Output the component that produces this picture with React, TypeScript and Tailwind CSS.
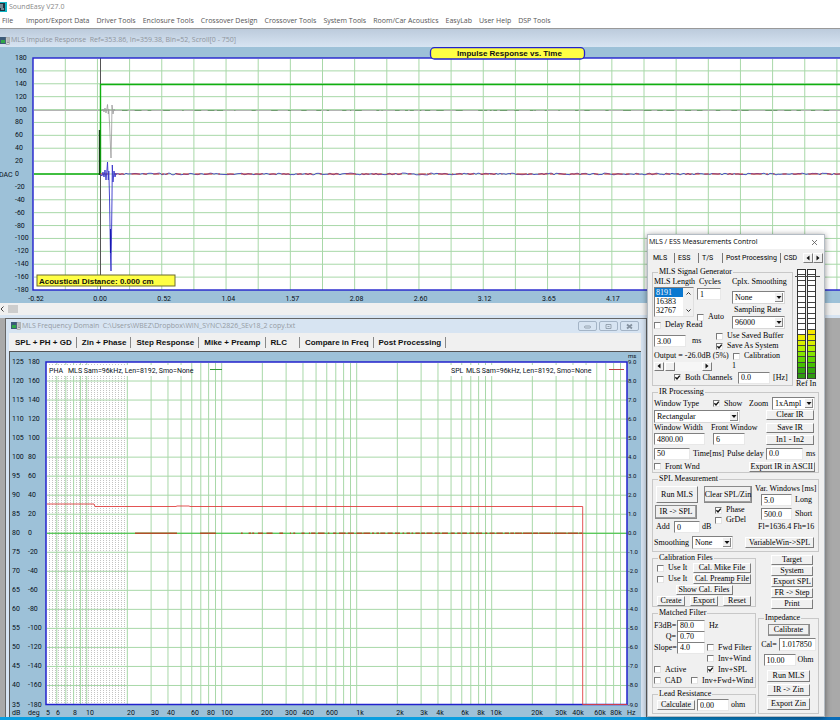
import { useId, useState } from 'react';
import type { ReactNode } from 'react';

/* ─── Static data ──────────────────────────────────────────────────────────── */
const MENU = [
  'File', 'Import/Export Data', 'Driver Tools', 'Enclosure Tools', 'Crossover Design', 'Crossover Tools',
  'System Tools', 'Room/Car Acoustics', 'EasyLab', 'User Help', 'DSP Tools',
];
const FREQ_TABS = [
  'SPL + PH + GD', 'Zin + Phase', 'Step Response', 'Mike + Preamp', 'RLC', 'Compare in Freq', 'Post Processing',
];
const CTRL_TABS = ['MLS', 'ESS', 'T/S', 'Post Processing', 'CSD'];

/* level colours, from the bottom segment up */
const METER = [
  '#2f9a10', '#33a60c', '#44c000', '#62d400', '#84e400', '#b4ee00', '#d8ee00', '#eeee00', '#f6e600',
];

const BLUE = '#2222cc';
const GRID = '#a8d8a8';
const BOLD_SANS = '"Liberation Sans", Arial, sans-serif';
const AXIS_SANS = 'Roboto, "Liberation Sans", Arial, sans-serif';

/* ─── Helpers ──────────────────────────────────────────────────────────────── */
// small repeatable generator, so the noise floor looks the same on every render
function seeded(seed: number) {
  let s = seed;
  return () => {
    s = (s * 1103515245 + 12345) % 2147483648;
    return s / 2147483648;
  };
}

function noisePath(y: number, from: number, to: number, amp: number, seed: number) {
  const rnd = seeded(seed);
  let d = `M${from},${y}`;
  for (let x = from + 1; x < to; x += 2) d += ` L${x},${(y + (rnd() - 0.5) * amp).toFixed(2)}`;
  return d;
}

function dashes(y: number, from: number, to: number, maxLen: number, maxGap: number, seed: number) {
  const rnd = seeded(seed);
  let d = '';
  let x = from;
  while (x < to) {
    const len = 1 + rnd() * maxLen;
    d += `M${x.toFixed(1)},${y} H${Math.min(to, x + len).toFixed(1)} `;
    x += len + 1 + rnd() * maxGap;
  }
  return d;
}

/* ─── Impulse response chart ───────────────────────────────────────────────── */
const IMP_STEP = 232 / 18;
const impY = (v: number) => 11 + ((180 - v) / 20) * IMP_STEP;

function ImpulseChart() {
  const levels = Array.from({ length: 19 }, (_, i) => 180 - i * 20);
  const cols = Array.from({ length: 60 }, (_, i) => 65.3 + i * 32.15);
  const times = ['-0.52', '0.00', '0.52', '1.04', '1.57', '2.08', '2.60', '3.12', '3.65', '4.17'];
  const zero = impY(0);

  return (
    <svg className="block h-64 w-full bg-[#9dc1d8]" fontFamily={AXIS_SANS} fontSize={7} fill="#081018">
      <rect x={33} y={11} width={4000} height={232} fill="#fff" />
      {levels.slice(1, -1).map(v => (
        <line key={v} x1={34} x2={4000} y1={impY(v)} y2={impY(v)} stroke={GRID} />
      ))}
      {cols.map(x => <line key={x} x1={x} x2={x} y1={12} y2={243} stroke={GRID} />)}

      {/* grey reference channel */}
      <line x1={34} x2={4000} y1={63.5} y2={63.5} stroke="#b4b4b4" />
      <path d={dashes(63.5, 122, 1600, 7, 16, 11)} stroke="#6f9c6f" fill="none" />
      <path
        d="M101,63 L102,64 L103,62 L104,65 L105,61 L106,66 L107,61 L107.5,57.5 L108.3,67 L108.8,62 L109.7,80 L110.5,100 L111,111 L111.5,90 L112,58 L113,67 L114,62 L115,64"
        stroke="#9a9a9a" strokeWidth={0.8} fill="none"
      />

      {/* step trace */}
      <line x1={100.5} x2={100.5} y1={11} y2={243} stroke="#555" />
      <path d={`M34,${zero} H100.5 V37.5 H4000`} stroke="#10b010" strokeWidth={1.4} fill="none" />
      <line x1={99.5} x2={99.5} y1={83} y2={128} stroke="#124012" strokeWidth={1.4} />

      {/* measured channel */}
      <path d={noisePath(zero, 115, 1600, 1.8, 5)} stroke="#2828b8" strokeWidth={0.8} fill="none" />
      <path d={dashes(zero, 100, 1600, 10, 7, 23)} stroke="#d83038" fill="none" />
      <path
        d="M100,127 L102,129 L103,125 L104,130 L105,123 L106,133 L107,122 L107.5,115 L108.3,133 L108.8,124 L109.5,150 L110,180 L110.5,210 L111,224 L111.5,190 L112,150 L112.3,118 L113,135 L114,124 L115,130 L116,126"
        stroke="#3434c8" strokeWidth={0.9} fill="none"
      />
      <line x1={110.5} x2={110.5} y1={182} y2={206} stroke="#1818b0" />

      <rect x={33} y={11} width={4000} height={232} fill="none" stroke={BLUE} strokeWidth={1.4} />

      {levels.map(v => (
        <text key={v} x={15} y={impY(v) + 2}>{v}</text>
      ))}
      <text x={-1} y={zero + 3}>DAC</text>
      {times.map((t, i) => (
        <text key={t} x={36 + i * 64.1} y={254} textAnchor="middle">{t}</text>
      ))}

      <rect x={37} y={228} width={138} height={11} fill="#ffff44" stroke="#6b6b30" />
      <text x={39} y={237} fontFamily={BOLD_SANS} fontSize={8} fontWeight={700} fill="#111">Acoustical Distance: 0.000 cm</text>

      <rect x={430.5} y={0.7} width={154} height={11.3} rx={4} fill="#ffff44" stroke={BLUE} strokeWidth={1.3} />
      <text x={509.5} y={9} fontFamily={BOLD_SANS} fontSize={8} fontWeight={700} fill="#111" textAnchor="middle">Impulse Response vs. Time</text>
    </svg>
  );
}

/* ─── Frequency chart ──────────────────────────────────────────────────────── */
const DECADE = 135;
const freqX = (f: number) => 211.7 + (Math.log10(f) - 2) * DECADE;
const FREQ_STEP = 342.5 / 18;

const FREQ_LABELS: [string, number][] = [
  ['5', 38], ['6', 48], ['8', 65], ['10', 80], ['20', 121], ['30', 145], ['40', 161], ['60', 185], ['80', 201],
  ['100', 217], ['200', 257], ['300', 281], ['400', 298], ['600', 322], ['1k', 350], ['2k', 390], ['3k', 414],
  ['4k', 430], ['6k', 455], ['8k', 471], ['10k', 486], ['20k', 527], ['30k', 551], ['40k', 568], ['60k', 590], ['80k', 606],
];

function FrequencyChart() {
  const rows = Array.from({ length: 19 }, (_, i) => i);
  const rowY = (i: number) => 10 + i * FREQ_STEP;
  const freqs = [1, 10, 100, 1000, 10000].flatMap(m => [1, 2, 3, 4, 5, 6, 7, 8, 9].map(k => k * m)).filter(f => f > 5);
  const zero = rowY(9);

  return (
    <svg className="block h-[365px] w-full bg-[#9dc1d8]" fontFamily={AXIS_SANS} fontSize={7} fill="#081018">
      <defs>
        <pattern id="low-band" width={3} height={2} patternUnits="userSpaceOnUse">
          <rect width={1} height={1} fill="#c4c4c4" />
        </pattern>
      </defs>
      <rect x={36} y={10} width={581} height={342.5} fill="#fff" />
      <rect x={37} y={11} width={80} height={341} fill="url(#low-band)" />
      {rows.slice(1, -1).map(i => <line key={i} x1={37} x2={617} y1={rowY(i)} y2={rowY(i)} stroke={GRID} />)}
      {freqs.map(f => <line key={f} x1={freqX(f)} x2={freqX(f)} y1={11} y2={352} stroke={GRID} />)}

      <line x1={37} x2={617} y1={zero} y2={zero} stroke="#3cc03c" strokeWidth={1.2} />
      <path d={`M125,${zero} H167 M190,${zero} H206`} stroke="#b05028" strokeWidth={1.4} />
      <path d={dashes(zero, 231, 330, 6, 6, 8)} stroke="#b05028" strokeWidth={1.4} />
      <path d={dashes(zero, 330, 510, 6, 2, 19)} stroke="#b05028" strokeWidth={1.4} />
      <path d={dashes(zero, 510, 572, 16, 0, 4)} stroke="#b05028" strokeWidth={1.4} />

      <rect x={36} y={10} width={581} height={342.5} fill="none" stroke={BLUE} strokeWidth={1.5} />
      <path
        d="M37,152 H84 L85,154.5 H166 L167,154 H179 L180,154.5 H572.7 V352.5 H617"
        stroke="#e04040" strokeWidth={0.9} fill="none"
      />

      {/* legends */}
      <rect x={38} y={13} width={142} height={11} fill="#fff" />
      <text x={39} y={21}>PHA</text>
      <text x={58} y={21}>MLS Sam=96kHz, Len=8192, Smo=None</text>
      <line x1={200} x2={212} y1={17.5} y2={17.5} stroke="#3a9a3a" />
      <rect x={439} y={13} width={138} height={11} fill="#fff" />
      <text x={441} y={21}>SPL</text>
      <text x={456} y={21}>MLS Sam=96kHz, Len=8192, Smo=None</text>
      <line x1={599} x2={614} y1={17.5} y2={17.5} stroke="#c04040" />

      {/* axes */}
      {rows.map(i => (
        <g key={i}>
          <text x={2} y={rowY(i) + 2}>{125 - i * 5}</text>
          <text x={18} y={rowY(i) + 2}>{180 - i * 20}</text>
          <text x={618} y={rowY(i) + 2} fontSize={6}>{(9 - i).toFixed(1)}</text>
        </g>
      ))}
      <text x={618} y={6} fontSize={6}>ms</text>
      <text x={2} y={363}>dB</text>
      <text x={18} y={363}>deg</text>
      {FREQ_LABELS.map(([t, x]) => (
        <text key={x} x={x} y={363} textAnchor="middle">{t}</text>
      ))}
      <text x={617} y={363}>Hz</text>
    </svg>
  );
}

/* ─── Form bits ────────────────────────────────────────────────────────────── */
function Group({ title, className = '', children }: { title: string; className?: string; children: ReactNode }) {
  return (
    <fieldset className={`min-w-0 border border-[#c8c8c8] px-px ${className}`}>
      <legend className="ml-1 h-2.5 px-px">{title}</legend>
      {children}
    </fieldset>
  );
}

function Check({ label, on = false, className = '' }: { label: string; on?: boolean; className?: string }) {
  const [checked, setChecked] = useState(on);
  return (
    <label className={`flex h-2.5 items-center gap-1 whitespace-nowrap ${className}`}>
      <span className="relative size-[7px] shrink-0">
        <input
          type="checkbox"
          checked={checked}
          onChange={e => setChecked(e.target.checked)}
          className="block size-[7px] appearance-none border border-t-[#7a7a7a] border-r-[#e4e4e4] border-b-[#e4e4e4] border-l-[#7a7a7a] bg-white"
        />
        {checked && (
          <svg viewBox="0 0 7 7" className="pointer-events-none absolute inset-0 size-[7px]">
            <path d="M1.4 3.2 L3 5 L5.8 1.6" stroke="#111" strokeWidth={1.4} fill="none" />
          </svg>
        )}
      </span>
      {label}
    </label>
  );
}

function Field({ label, value, className }: { label: string; value: string; className: string }) {
  return (
    <input
      aria-label={label}
      defaultValue={value}
      className={`h-3 shrink-0 border border-t-[#808080] border-r-[#e8e8e8] border-b-[#e8e8e8] border-l-[#808080] bg-white px-0.5 ${className}`}
    />
  );
}

function Pick({ label, options, className }: { label: string; options: string[]; className: string }) {
  return (
    <span className={`relative block h-[13px] shrink-0 ${className}`}>
      <select
        aria-label={label}
        className="block h-full w-full appearance-none border border-t-[#808080] border-r-[#d8d8d8] border-b-[#d8d8d8] border-l-[#808080] bg-white px-0.5"
      >
        {options.map(o => <option key={o}>{o}</option>)}
      </select>
      <span className="pointer-events-none absolute inset-y-0.5 right-0.5 flex w-2 items-center justify-center border-r border-b border-[#888] bg-[#f0f0f0]">
        <svg viewBox="0 0 6 3" className="h-[3px] w-1.5"><path d="M0.5 0 H5.5 L3 3 Z" fill="#111" /></svg>
      </span>
    </span>
  );
}

function Btn({ className = '', strong = false, children }: { className?: string; strong?: boolean; children: ReactNode }) {
  const edge = strong
    ? 'border border-[#8a8a8a] shadow-[inset_-1px_-1px_0_#a0a0a0]'
    : 'border border-t-white border-l-white border-r-[#7c7c7c] border-b-[#7c7c7c]';
  return (
    <button type="button" className={`flex shrink-0 items-center justify-center whitespace-nowrap bg-[#f0f0f0] ${edge} ${className}`}>
      {children}
    </button>
  );
}

function Arrow({ dir }: { dir: 'left' | 'right' }) {
  return (
    <svg viewBox="0 0 4 6" className="h-1.5 w-1">
      <path d={dir === 'left' ? 'M3.5 0.5 V5.5 L0.5 3 Z' : 'M0.5 0.5 V5.5 L3.5 3 Z'} fill="#111" />
    </svg>
  );
}

function Meter({ level }: { level: number }) {
  return (
    <div className="flex h-[110px] w-[9px] flex-col-reverse border border-b-0 border-[#333] bg-white">
      {Array.from({ length: 20 }, (_, i) => (
        <div key={i} className="flex-1 border-b border-[#444]" style={{ background: i < level ? METER[i] : '#fff' }} />
      ))}
    </div>
  );
}

/* ─── Measurement dialog ───────────────────────────────────────────────────── */
function LengthList() {
  const id = useId();
  return (
    <div className="flex w-[43px] flex-col">
      <label htmlFor={id} className="h-2.5 whitespace-nowrap">MLS Length</label>
      <div className="mb-[3px] flex h-[30px] w-10 border border-t-[#808080] border-r-[#e0e0e0] border-b-[#e0e0e0] border-l-[#808080] bg-white">
        <select id={id} size={3} defaultValue="8191" className="h-full w-7 appearance-none overflow-hidden bg-none p-0 leading-[9px]">
          {['8191', '16383', '32767'].map(n => (
            <option key={n} className="h-[9px] min-h-0 px-px py-0 text-[8px] leading-[9px] checked:bg-[linear-gradient(#0a78d0,#0a78d0)] checked:text-white">{n}</option>
          ))}
        </select>
        <div className="flex w-2.5 flex-col items-center justify-between bg-[#f0f0f0] py-1">
          <svg viewBox="0 0 5 3" className="h-[3px] w-[5px]"><path d="M0.5 2.5 L2.5 0.5 L4.5 2.5" stroke="#333" fill="none" /></svg>
          <svg viewBox="0 0 5 3" className="h-[3px] w-[5px]"><path d="M0.5 0.5 L2.5 2.5 L4.5 0.5" stroke="#333" fill="none" /></svg>
        </div>
      </div>
      <Check label="Delay Read" />
    </div>
  );
}

function SignalGenerator() {
  return (
    <Group title="MLS Signal Generator" className="h-[119px] w-[141px]">
      <div className="flex h-[54px]">
        <LengthList />
        <div className="flex w-[35px] flex-col">
          <span className="mb-px h-2.5 pl-0.5">Cycles</span>
          <Field label="Cycles" value="1" className="mb-3 w-6" />
          <Check label="Auto" />
        </div>
        <div className="flex flex-col">
          <span className="mb-1 h-2.5 whitespace-nowrap">Cplx. Smoothing</span>
          <Pick label="Cplx. Smoothing" options={['None', '1/3', '1/6']} className="w-[53px]" />
          <span className="my-px h-2.5 pl-0.5 whitespace-nowrap">Sampling Rate</span>
          <Pick label="Sampling Rate" options={['96000', '48000']} className="w-[53px]" />
        </div>
      </div>
      <div className="flex h-5 items-center">
        <Field label="Delay" value="3.00" className="mr-1.5 w-8" />
        <span className="w-6">ms</span>
        <div className="flex flex-col">
          <Check label="Use Saved Buffer" />
          <Check label="Save As System" on />
        </div>
      </div>
      <div className="flex h-2.5 items-center">
        <span className="w-[79px] whitespace-nowrap">Output = -26.0dB (5%)</span>
        <Check label="Calibration" />
      </div>
      <div className="flex h-2.5 items-center">
        <div className="mr-5 flex h-[9px] w-[58px] justify-between bg-[#f6f6f6]">
          <Btn className="w-2.5"><Arrow dir="left" /></Btn>
          <Btn className="mr-auto ml-px w-2.5">{null}</Btn>
          <Btn className="w-2.5"><Arrow dir="right" /></Btn>
        </div>
        <span>1</span>
      </div>
      <div className="flex h-[13px] items-center pl-5">
        <Check label="Both Channels" on className="w-16" />
        <Field label="Both Channels [Hz]" value="0.0" className="mr-[3px] w-8" />
        <span>[Hz]</span>
      </div>
    </Group>
  );
}

function IrProcessing() {
  return (
    <Group title="IR Processing" className="h-[86px]">
      <div className="flex h-[13px] items-center">
        <span className="w-[59px]">Window Type</span>
        <Check label="Show" on className="w-9" />
        <span className="w-[23px]">Zoom</span>
        <Pick label="Zoom" options={['1xAmpl', '2xAmpl']} className="w-[43px]" />
      </div>
      <div className="flex h-[35px]">
        <div className="flex w-28 flex-col">
          <Pick label="Window Type" options={['Rectangular', 'Hann']} className="w-[86px]" />
          <div className="flex h-2.5 whitespace-nowrap">
            <span className="w-[57px]">Window Width</span>
            <span>Front Window</span>
          </div>
          <div className="flex">
            <Field label="Window Width" value="4800.00" className="mr-2 w-[51px]" />
            <Field label="Front Window" value="6" className="w-8" />
          </div>
        </div>
        <div className="flex flex-col justify-between">
          <Btn className="h-2.5 w-12">Clear IR</Btn>
          <Btn className="h-2.5 w-12">Save IR</Btn>
          <Btn className="h-2.5 w-12">In1 - In2</Btn>
        </div>
      </div>
      <div className="mt-0.5 flex h-[13px] items-center whitespace-nowrap">
        <Field label="Time [ms]" value="50" className="mr-[3px] w-9" />
        <span className="w-[34px]">Time[ms]</span>
        <span className="w-[39px]">Pulse delay</span>
        <Field label="Pulse delay" value="0.0" className="mr-[3px] w-[37px]" />
        <span>ms</span>
      </div>
      <div className="flex h-[13px] items-center justify-between pr-0.5">
        <Check label="Front Wnd" />
        <Btn className="h-2.5 px-px">Export IR in ASCII</Btn>
      </div>
    </Group>
  );
}

function SplMeasurement() {
  return (
    <Group title="SPL Measurement" className="h-[78px]">
      <div className="flex h-[50px]">
        <div className="flex w-[101px] flex-col pt-0.5">
          <div className="mb-0.5 flex gap-1.5 pl-0.5">
            <Btn className="h-[17px] w-[42px]">Run MLS</Btn>
            <Btn strong className="h-[17px] w-12">Clear SPL/Zin</Btn>
          </div>
          <div className="flex">
            <div className="flex w-[61px] flex-col gap-0.5 pl-px">
              <Btn strong className="h-[14px] w-[42px]">IR -&gt; SPL</Btn>
              <div className="flex items-center">
                <span className="w-[19px] pl-px">Add</span>
                <Field label="Add" value="0" className="mr-0.5 w-[26px]" />
                <span>dB</span>
              </div>
            </div>
            <div className="flex flex-col">
              <Check label="Phase" on />
              <Check label="GrDel" />
            </div>
          </div>
        </div>
        <div className="flex flex-col whitespace-nowrap">
          <span className="h-2.5">Var. Windows [ms]</span>
          <div className="mb-0.5 flex items-center gap-[3px] pl-1.5">
            <Field label="Long window" value="5.0" className="w-[31px]" />
            <span>Long</span>
          </div>
          <div className="mb-0.5 flex items-center gap-[3px] pl-1.5">
            <Field label="Short window" value="500.0" className="w-[31px]" />
            <span>Short</span>
          </div>
          <span className="h-2.5 pl-[3px]">Fl=1636.4 Fh=16</span>
        </div>
      </div>
      <div className="mt-0.5 flex h-[13px] items-center">
        <span className="w-[38px]">Smoothing</span>
        <Pick label="Smoothing" options={['None', '1/3', '1/12']} className="mr-3 w-[41px]" />
        <Btn className="h-[11px] w-[69px]">VariableWin-&gt;SPL</Btn>
      </div>
    </Group>
  );
}

function CalibrationFiles() {
  return (
    <Group title="Calibration Files" className="h-[54px]">
      <div className="flex flex-col gap-px">
        <div className="flex items-center justify-between px-[3px]">
          <Check label="Use It" />
          <Btn className="h-2.5 w-[58px]">Cal. Mike File</Btn>
        </div>
        <div className="flex items-center justify-between px-[3px]">
          <Check label="Use It" />
          <Btn className="h-2.5 w-[58px]">Cal. Preamp File</Btn>
        </div>
        <div className="flex justify-center">
          <Btn className="h-2.5 w-[57px]">Show Cal. Files</Btn>
        </div>
        <div className="flex justify-between px-[3px]">
          <Btn className="h-2.5 w-7">Create</Btn>
          <Btn className="h-2.5 w-7">Export</Btn>
          <Btn className="h-2.5 w-7">Reset</Btn>
        </div>
      </div>
    </Group>
  );
}

function MatchedFilter() {
  return (
    <Group title="Matched Filter" className="h-20">
      <div className="mt-0.5 grid auto-rows-[11px] items-center whitespace-nowrap">
        <div className="flex items-center">
          <span className="w-[23px] pr-px text-right">F3dB=</span>
          <Field label="F3dB" value="80.0" className="mr-1 w-7" />
          <span>Hz</span>
        </div>
        <div className="flex items-center">
          <span className="w-[23px] pr-px text-right">Q=</span>
          <Field label="Q" value="0.70" className="w-7" />
        </div>
        <div className="flex items-center">
          <span className="w-[23px] pr-px text-right">Slope=</span>
          <Field label="Slope" value="4.0" className="mr-0.5 w-7" />
          <Check label="Fwd Filter" />
        </div>
        <Check label="Inv+Wind" className="pl-[53px]" />
        <div className="flex">
          <Check label="Active" className="w-[53px]" />
          <Check label="Inv+SPL" on />
        </div>
        <div className="flex">
          <Check label="CAD" className="w-[37px]" />
          <Check label="Inv+Fwd+Wind" />
        </div>
      </div>
    </Group>
  );
}

function Impedance() {
  return (
    <Group title="Impedance" className="h-[101px] w-[61px]">
      <div className="flex flex-col items-center pt-px">
        <Btn strong className="mb-0.5 h-3 w-[42px]">Calibrate</Btn>
        <div className="mb-[3px] flex items-center gap-0.5">
          <span>Cal=</span>
          <Field label="Cal" value="1.017850" className="h-[13px] w-[37px]" />
        </div>
        <div className="mb-1 flex items-center gap-0.5">
          <Field label="Ohm" value="10.00" className="w-8" />
          <span>Ohm</span>
        </div>
        <div className="flex flex-col gap-0.5">
          <Btn className="h-3 w-[43px]">Run MLS</Btn>
          <Btn className="h-3 w-[43px]">IR -&gt; Zin</Btn>
          <Btn className="h-3 w-[43px]">Export Zin</Btn>
        </div>
      </div>
    </Group>
  );
}

function MeasurementDialog() {
  return (
    <section
      role="dialog"
      aria-label="MLS / ESS Measurements Control"
      className="absolute top-[234px] left-[647px] w-[178px] border border-[#b4bcc4] bg-[#f0f0f0] pb-0.5 font-['Liberation_Serif',serif] text-[8px] leading-[10px] text-black shadow-[0_1px_6px_rgba(0,0,0,0.45)]"
    >
      <header className="flex h-[14px] items-center justify-between bg-white pr-1.5 pl-px font-['Open_Sans',sans-serif] text-[7px]">
        <span>MLS / ESS Measurements Control</span>
        <button type="button" aria-label="Close">
          <svg viewBox="0 0 7 7" className="size-[7px]"><path d="M1 1 L6 6 M6 1 L1 6" stroke="#555" strokeWidth={0.8} /></svg>
        </button>
      </header>
      <nav className="flex h-[17px] items-center pl-0.5 font-['Roboto',sans-serif] text-[7px]">
        {CTRL_TABS.map((t, i) => (
          <button
            key={t}
            type="button"
            className={`h-2.5 pl-[3px] text-left whitespace-nowrap ${i ? 'border-l border-[#777]' : ''} ${i < 3 ? 'w-6' : 'pr-[3px]'}`}
          >
            {t}
          </button>
        ))}
        <span className="mr-px ml-auto flex">
          <Btn className="size-2.5"><Arrow dir="left" /></Btn>
          <Btn className="size-2.5"><Arrow dir="right" /></Btn>
        </span>
      </nav>

      <div className="flex flex-col gap-px pt-px pr-[5px] pl-1">
        <div className="flex h-[119px]">
          <SignalGenerator />
          <div className="flex flex-col items-center pt-0.5 pl-[3px]">
            <div className="relative flex gap-px">
              <Meter level={8} />
              <Meter level={9} />
              <div className="absolute top-[7px] -right-1 -left-0.5 h-px bg-[#444]" />
            </div>
            <span className="h-2.5 whitespace-nowrap">Ref In</span>
          </div>
        </div>
        <IrProcessing />
        <SplMeasurement />
        <div className="flex justify-between">
          <div className="flex w-[104px] flex-col gap-px">
            <CalibrationFiles />
            <MatchedFilter />
            <Group title="Lead Resistance" className="h-[25px]">
              <div className="flex items-center gap-0.5 pl-[3px]">
                <Btn className="h-2.5 w-[38px]">Calculate</Btn>
                <Field label="Lead resistance" value="0.00" className="w-8" />
                <span>ohm</span>
              </div>
            </Group>
          </div>
          <div className="flex flex-col justify-between">
            <div className="flex flex-col items-center gap-px pt-0.5 pl-[7px]">
              {['Target', 'System', 'Export SPL', 'FR -> Step', 'Print'].map(t => (
                <Btn key={t} className="h-2.5 w-[42px]">{t}</Btn>
              ))}
            </div>
            <Impedance />
          </div>
        </div>
      </div>
    </section>
  );
}

/* ─── Windows ──────────────────────────────────────────────────────────────── */
function WindowIcon() {
  return (
    <svg viewBox="0 0 10 8" className="h-2 w-2.5 shrink-0">
      <rect width={6} height={7} fill="#3c5a78" />
      <rect x={1} y={3} width={4} height={3} fill="#30a848" />
      <rect x={6} y={0.5} width={3.5} height={7} fill="#d8dcd8" stroke="#888" strokeWidth={0.5} />
      <path d="M7 2 H9 M7 4 H9 M7 5.5 H9" stroke="#667" strokeWidth={0.6} />
    </svg>
  );
}

const FRAME_BUTTONS: [string, ReactNode][] = [
  ['Minimize', <rect key="a" x={2.5} y={3} width={6} height={2} rx={1} />],
  ['Maximize', <path key="b" d="M3 1.5 H8 V5.5 H3 Z M4.5 3.5 H6.5" />],
  ['Close', <path key="c" d="M3 1.5 L8 5.5 M8 1.5 L3 5.5" strokeWidth={1.8} />],
];

function FrequencyWindow() {
  return (
    <section className="ml-[5px] w-[642px] border-x border-t border-[#666] bg-[#d7e4f2] pr-[5px] pl-[3px]">
      <header className="flex h-[14px] items-center gap-px px-0.5 font-['Open_Sans',sans-serif] text-[7px] text-[#959ba3]">
        <WindowIcon />
        <span className="whitespace-pre">MLS Frequency Domain  C:\Users\WBEZ\Dropbox\WIN_SYNC\2826_SEv18_2 copy.txt</span>
        <span className="ml-auto flex gap-0.5">
          {FRAME_BUTTONS.map(([name, shape]) => (
            <button key={name} type="button" aria-label={name} className="flex h-2.5 w-[19px] items-center justify-center rounded-xs border border-[#a4b4c6]">
              <svg viewBox="0 0 11 7" className="h-[7px] w-[11px]" fill="none" stroke="#8592a0" strokeWidth={0.8}>{shape}</svg>
            </button>
          ))}
        </span>
      </header>
      <nav className="flex h-[18px] items-center bg-[#f0f0f0] pl-px font-['Liberation_Sans',Arial,sans-serif] text-[8px] leading-[11px] font-bold text-[#111]">
        {FREQ_TABS.map(t => (
          <button key={t} type="button" className={`h-[11px] border-r border-[#888] pl-[5px] whitespace-nowrap ${t === 'RLC' ? 'pr-3' : 'pr-1'}`}>{t}</button>
        ))}
      </nav>
      <div className="border-t border-l border-[#555]">
        <FrequencyChart />
      </div>
    </section>
  );
}

export default function App() {
  return (
    <main className="relative flex w-full flex-col overflow-hidden bg-[#a9a9a9]">
      <header className="bg-white font-['Open_Sans',sans-serif]">
        <div className="flex h-[14px] items-center gap-0.5 text-[7px] text-[#888]">
          <svg viewBox="0 0 7 10" className="h-2.5 w-[7px] shrink-0">
            <rect width={7} height={10} fill="#10b4c4" />
            <rect y={1} width={5} height={8} fill="#1c3440" />
            <path d="M0 3 H3 M0 5 H3 M1 7 H4" stroke="#e8f4f8" strokeWidth={0.9} />
          </svg>
          <h1>SoundEasy V27.0</h1>
        </div>
        <nav className="flex h-[14px] items-center gap-[7px] pl-0.5 text-[7px] whitespace-nowrap text-[#555]">
          {MENU.map(m => <button key={m} type="button" className={m === 'File' ? 'pr-1.5' : ''}>{m}</button>)}
        </nav>
      </header>

      <section className="border-t border-[#999] bg-[#d7e4f2] pb-[3px]">
        <header className="flex h-[18px] items-end gap-px bg-linear-to-b from-[#bccbdc] to-[#d7e4f2] pb-0.5 font-['Open_Sans',sans-serif] text-[7px] leading-[10px] text-[#8f959d]">
          <WindowIcon />
          <span className="whitespace-pre">MLS Impulse Response  Ref=353.86, In=359.38, Bin=52, Scroll[0 - 750]</span>
        </header>
        <ImpulseChart />
        <div className="flex h-3 items-center gap-1 bg-[#f0f0f0]">
          <button type="button" aria-label="Scroll left">
            <svg viewBox="0 0 4 6" className="h-1.5 w-1"><path d="M3.5 0.5 L1 3 L3.5 5.5" stroke="#444" fill="none" /></svg>
          </button>
          <div className="h-2 w-2.5 bg-[#cdcdcd]" />
        </div>
      </section>

      <FrequencyWindow />
      <footer className="h-[3px] bg-linear-to-r from-[#0a9ee0] from-70% to-[#0a6cb8]" />
      <MeasurementDialog />
    </main>
  );
}
